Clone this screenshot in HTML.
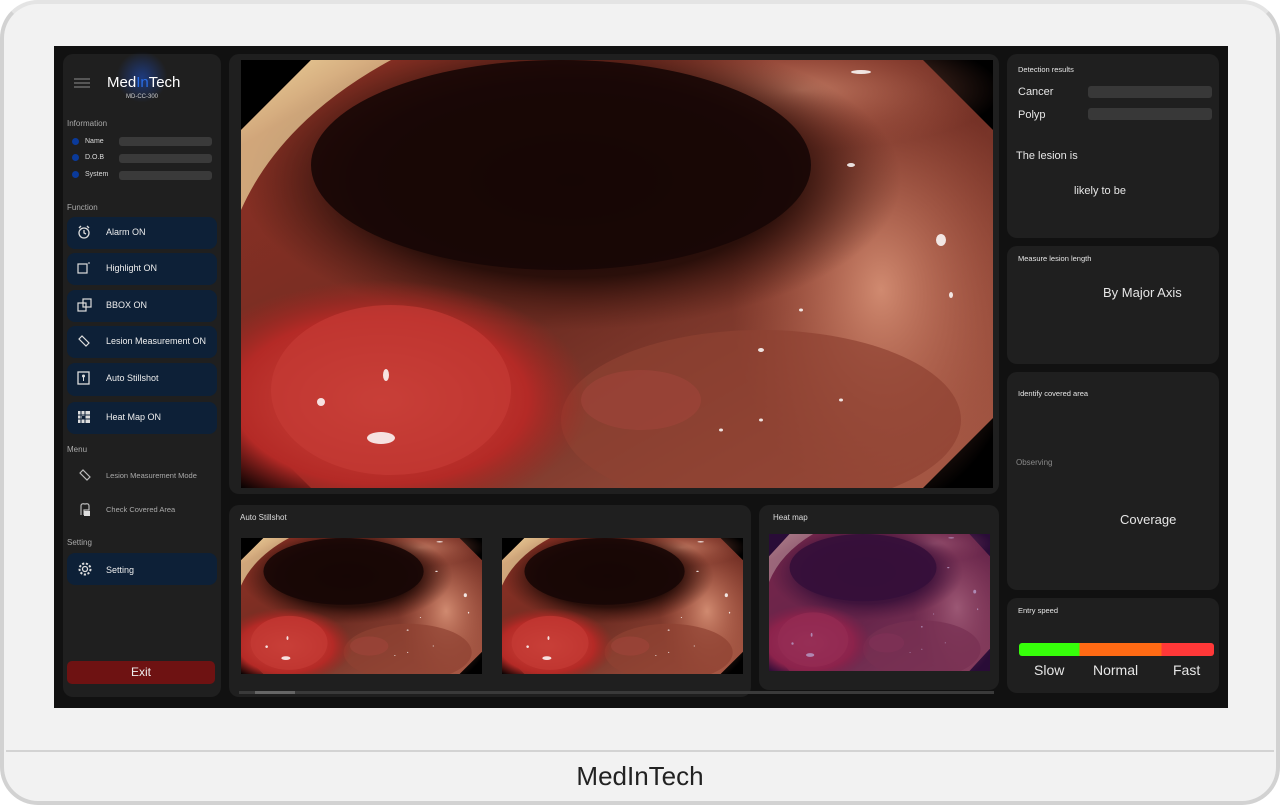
<!DOCTYPE html>
<html><head><meta charset="utf-8"><style>
*{margin:0;padding:0;box-sizing:border-box}
body{width:1280px;height:807px;background:#fff;font-family:"Liberation Sans",sans-serif;position:relative;overflow:hidden;color:#e6e6e6}
.dev{position:absolute;left:0;top:0;width:1280px;height:805px;border-radius:38px;background:#f2f2f2;border:4px solid #d2d2d2;border-top:4px solid #e4e4e4}
.line{position:absolute;left:6px;right:6px;top:750px;height:2px;background:#d3d3d3}
.brand{position:absolute;left:0;width:1280px;top:761px;text-align:center;font-size:26px;color:#222}
.scr{position:absolute;left:54px;top:46px;width:1174px;height:662px;background:#111}
.p{position:absolute;background:#1f1f1f;border-radius:10px}
.a{position:absolute;white-space:nowrap}
.btn{position:absolute;left:67px;width:150px;height:32px;background:#0d2037;border-radius:8px;font-size:9px;color:#eee}
.btn span{position:absolute;left:39px;top:10px}
.btn svg{position:absolute;left:10px;top:8px}
.bar{position:absolute;left:119px;width:93px;height:9px;background:#3a3a3a;border-radius:3px}
.dot{position:absolute;left:72px;width:7px;height:7px;border-radius:50%;background:#0a3a9a}
.lbl{position:absolute;left:85px;font-size:7px;color:#ddd}
.sm{font-size:8px;color:#ddd}
</style></head><body>
<div class="dev"></div>
<div class="line"></div>
<div class="brand">MedInTech</div>
<div class="scr"></div>

<svg width="0" height="0" style="position:absolute">
<defs>
<radialGradient id="lum" cx="0.5" cy="0.5" r="0.5"><stop offset="0" stop-color="#120605"/><stop offset="0.65" stop-color="#2a0f0a"/><stop offset="1" stop-color="#4a1d14" stop-opacity="0"/></radialGradient>
<radialGradient id="red" cx="0.5" cy="0.5" r="0.5"><stop offset="0" stop-color="#d04a40"/><stop offset="0.7" stop-color="#b42a26"/><stop offset="1" stop-color="#a02520" stop-opacity="0"/></radialGradient>
<linearGradient id="base" x1="0" y1="0" x2="1" y2="1"><stop offset="0" stop-color="#e8c890"/><stop offset="0.1" stop-color="#8a3024"/><stop offset="0.5" stop-color="#6e2c22"/><stop offset="1" stop-color="#a85a46"/></linearGradient>
<radialGradient id="sal" cx="0.5" cy="0.5" r="0.5"><stop offset="0" stop-color="#d08a70"/><stop offset="1" stop-color="#b8604a" stop-opacity="0"/></radialGradient>
<g id="colon">
<rect width="752" height="428" fill="#000"/>
<polygon points="70,0 682,0 752,70 752,358 682,428 70,428 0,358 0,70" fill="url(#base)"/>
<ellipse cx="640" cy="230" rx="150" ry="220" fill="url(#sal)"/>
<ellipse cx="560" cy="30" rx="200" ry="60" fill="url(#sal)" opacity="0.8"/>
<ellipse cx="520" cy="360" rx="200" ry="90" fill="#8e4232" opacity="0.7"/>
<ellipse cx="330" cy="120" rx="330" ry="150" fill="url(#lum)"/>
<ellipse cx="320" cy="105" rx="250" ry="105" fill="#170706" opacity="0.9"/>
<ellipse cx="140" cy="340" rx="210" ry="120" fill="url(#red)"/>
<ellipse cx="150" cy="330" rx="120" ry="85" fill="#c43a34" opacity="0.7"/>
<ellipse cx="400" cy="340" rx="60" ry="30" fill="#a0443a" opacity="0.6"/>
<path d="M0,70 L70,0 L150,0 Q40,60 0,150Z" fill="#f0d9a0" opacity="0.7"/>
<g fill="#fff" opacity="0.85"><ellipse cx="140" cy="378" rx="14" ry="6"/><ellipse cx="80" cy="342" rx="4" ry="4"/><ellipse cx="145" cy="315" rx="3" ry="6"/><ellipse cx="700" cy="180" rx="5" ry="6"/><ellipse cx="610" cy="105" rx="4" ry="2"/><ellipse cx="520" cy="290" rx="3" ry="2"/><ellipse cx="480" cy="370" rx="2" ry="1.5"/><ellipse cx="520" cy="360" rx="2" ry="1.5"/><ellipse cx="600" cy="340" rx="2" ry="1.5"/><ellipse cx="620" cy="12" rx="10" ry="2"/><ellipse cx="710" cy="235" rx="2" ry="3"/><ellipse cx="560" cy="250" rx="2" ry="1.5"/></g>
</g>
</defs></svg>

<!-- left panel -->
<div class="p" style="left:63px;top:54px;width:158px;height:643px"></div>
<div class="a" style="left:112px;top:52px;width:60px;height:50px;background:radial-gradient(circle,rgba(30,80,200,0.55),rgba(30,80,200,0) 65%)"></div>
<svg class="a" style="left:74px;top:78px" width="16" height="10"><path d="M0 1H16M0 5H16M0 9H16" stroke="#777" stroke-width="1.2"/></svg>
<div class="a" style="left:107px;top:74px;font-size:15px;color:#fff">Med<span style="color:#2a6ee6">In</span>Tech</div>
<div class="a" style="left:126px;top:94px;font-size:6px;color:#ccc">MD-CC-300</div>
<div class="a sm" style="left:67px;top:119px;color:#aaa">Information</div>
<div class="dot" style="top:138px"></div><div class="lbl" style="top:138px">Name</div><div class="bar" style="top:137px"></div>
<div class="dot" style="top:154px"></div><div class="lbl" style="top:154px">D.O.B</div><div class="bar" style="top:154px"></div>
<div class="dot" style="top:171px"></div><div class="lbl" style="top:171px">System</div><div class="bar" style="top:171px"></div>
<div class="a sm" style="left:67px;top:203px;color:#aaa">Function</div>
<div class="btn" style="top:217px"><svg width="14" height="14"><circle cx="7" cy="8" r="5" fill="none" stroke="#ddd" stroke-width="1.3"/><path d="M7 5V8L9 9M2 3L4 1M12 3L10 1" stroke="#ddd" stroke-width="1.3" fill="none"/></svg><span>Alarm ON</span></div>
<div class="btn" style="top:253px"><svg width="14" height="14"><rect x="1" y="3" width="9" height="9" fill="none" stroke="#ddd" stroke-width="1.2"/><path d="M12 1V3" stroke="#ddd"/></svg><span>Highlight ON</span></div>
<div class="btn" style="top:290px"><svg width="16" height="14"><rect x="1" y="5" width="8" height="8" fill="none" stroke="#ddd" stroke-width="1.2"/><rect x="6" y="1" width="8" height="8" fill="none" stroke="#ddd" stroke-width="1.2"/></svg><span>BBOX ON</span></div>
<div class="btn" style="top:326px"><svg width="14" height="14"><path d="M2 5L5 2L12 9L9 12Z" fill="none" stroke="#ddd" stroke-width="1.2"/></svg><span>Lesion Measurement ON</span></div>
<div class="btn" style="top:363px;height:33px"><svg width="14" height="14"><rect x="1" y="1" width="11" height="12" fill="none" stroke="#ddd" stroke-width="1.3"/><circle cx="6.5" cy="5" r="1.5" fill="#ddd"/><path d="M6.5 6V10" stroke="#ddd"/></svg><span>Auto Stillshot</span></div>
<div class="btn" style="top:402px"><svg width="14" height="14"><rect x="1" y="1" width="12" height="12" fill="#ddd"/><path d="M4 1V13M8 1V13M1 5H13M1 9H13" stroke="#0d2037" stroke-width="1"/><rect x="5" y="6" width="3" height="3" fill="#0d2037"/></svg><span>Heat Map ON</span></div>
<div class="a sm" style="left:67px;top:445px;color:#aaa">Menu</div>
<svg class="a" style="left:78px;top:468px" width="14" height="14"><path d="M2 5L5 2L12 9L9 12Z" fill="none" stroke="#bbb" stroke-width="1.2"/></svg>
<div class="a" style="left:106px;top:471px;font-size:7.5px;color:#aaa">Lesion Measurement Mode</div>
<svg class="a" style="left:78px;top:502px" width="14" height="14"><path d="M3 13V4Q3 1 7 2Q11 1 11 4V8H6V13" fill="none" stroke="#bbb" stroke-width="1.2"/><rect x="6" y="9" width="6" height="5" fill="#ddd"/></svg>
<div class="a" style="left:106px;top:505px;font-size:7.5px;color:#aaa">Check Covered Area</div>
<div class="a sm" style="left:67px;top:538px;color:#aaa">Setting</div>
<div class="btn" style="top:553px"><svg width="16" height="16" style="top:8px"><circle cx="8" cy="8" r="2.5" fill="none" stroke="#ddd" stroke-width="1.3"/><circle cx="8" cy="8" r="5.5" fill="none" stroke="#ddd" stroke-width="2" stroke-dasharray="2.2 1.6"/></svg><span style="top:12px">Setting</span></div>
<div class="a" style="left:67px;top:661px;width:148px;height:23px;background:#6e1212;border-radius:5px;font-size:12px;color:#eee;text-align:center;line-height:23px">Exit</div>

<!-- main video -->
<div class="p" style="left:229px;top:54px;width:770px;height:440px"></div>
<svg class="a" style="left:241px;top:60px" width="752" height="428" viewBox="0 0 752 428"><use href="#colon"/></svg>

<!-- auto stillshot -->
<div class="p" style="left:229px;top:505px;width:522px;height:192px"></div>
<div class="a sm" style="left:240px;top:513px">Auto Stillshot</div>
<svg class="a" style="left:241px;top:538px" width="241" height="136" viewBox="0 0 752 428" preserveAspectRatio="none"><use href="#colon"/></svg>
<svg class="a" style="left:502px;top:538px" width="241" height="136" viewBox="0 0 752 428" preserveAspectRatio="none"><use href="#colon"/></svg>
<div class="a" style="left:239px;top:691px;width:755px;height:3px;background:#3a3a3a"></div>
<div class="a" style="left:255px;top:691px;width:40px;height:3px;background:#666"></div>

<!-- heat map -->
<div class="p" style="left:759px;top:505px;width:240px;height:185px"></div>
<div class="a sm" style="left:773px;top:513px">Heat map</div>
<svg class="a" style="left:769px;top:534px" width="221" height="137" viewBox="0 0 752 428" preserveAspectRatio="none"><use href="#colon"/><rect width="752" height="428" fill="#5a1a7a" opacity="0.45"/></svg>

<!-- right panels -->
<div class="p" style="left:1007px;top:54px;width:212px;height:184px"></div>
<div class="a" style="left:1018px;top:65px;font-size:7.5px">Detection results</div>
<div class="a" style="left:1018px;top:86px;font-size:11px">Cancer</div>
<div class="a" style="left:1088px;top:86px;width:124px;height:12px;background:#383838;border-radius:3px"></div>
<div class="a" style="left:1018px;top:109px;font-size:11px">Polyp</div>
<div class="a" style="left:1088px;top:108px;width:124px;height:12px;background:#383838;border-radius:3px"></div>
<div class="a" style="left:1016px;top:150px;font-size:11px">The lesion is</div>
<div class="a" style="left:1074px;top:185px;font-size:11px">likely to be</div>

<div class="p" style="left:1007px;top:246px;width:212px;height:118px"></div>
<div class="a" style="left:1018px;top:254px;font-size:7.5px">Measure lesion length</div>
<div class="a" style="left:1103px;top:285px;font-size:13px">By Major Axis</div>

<div class="p" style="left:1007px;top:372px;width:212px;height:218px"></div>
<div class="a" style="left:1018px;top:389px;font-size:7.5px">Identify covered area</div>
<div class="a" style="left:1016px;top:458px;font-size:8px;color:#888">Observing</div>
<div class="a" style="left:1120px;top:512px;font-size:13px">Coverage</div>

<div class="p" style="left:1007px;top:598px;width:212px;height:95px"></div>
<div class="a" style="left:1018px;top:606px;font-size:7.5px">Entry speed</div>
<div class="a" style="left:1019px;top:643px;width:195px;height:13px;border-radius:3px;background:linear-gradient(90deg,#36ff0a 0 31%,#ff6a14 31% 73%,#ff3838 73%)"></div>
<div class="a" style="left:1034px;top:662px;font-size:14px">Slow</div>
<div class="a" style="left:1093px;top:662px;font-size:14px">Normal</div>
<div class="a" style="left:1173px;top:662px;font-size:14px">Fast</div>
</body></html>
